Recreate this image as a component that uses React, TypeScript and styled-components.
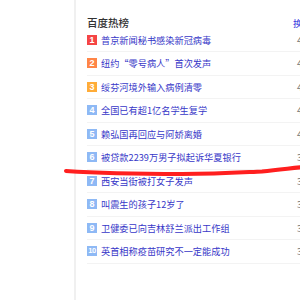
import React from 'react';
import styled, { createGlobalStyle } from 'styled-components';

const GlobalStyle = createGlobalStyle`
  html, body {
    margin: 0;
    padding: 0;
    background: #fff;
    overflow: hidden;
  }
  body {
    font-family: "Noto Sans CJK SC", "Noto Sans", Arial, sans-serif;
  }
`;

const hotList = [
  { title: '普京新闻秘书感染新冠病毒', index: '4985621' },
  { title: '纽约“零号病人”首次发声', index: '4872310' },
  { title: '绥芬河境外输入病例清零', index: '4710458' },
  { title: '全国已有超1亿名学生复学', index: '4528903' },
  { title: '赖弘国再回应与阿娇离婚', index: '4301276' },
  { title: '被贷款2239万男子拟起诉华夏银行', index: '3986514' },
  { title: '西安当街被打女子发声', index: '3752098' },
  { title: '叫震生的孩子12岁了', index: '3510387' },
  { title: '卫健委已向吉林舒兰派出工作组', index: '3298470' },
  { title: '英首相称疫苗研究不一定能成功', index: '3107652' },
];

const badgeColor = (rank: number) => {
  if (rank === 1) return '#f54545';
  if (rank === 2) return '#ff8547';
  if (rank === 3) return '#ffac38';
  return '#8eb9f5';
};

const Page = styled.div`
  position: relative;
  display: flex;
  width: 300px;
  height: 300px;
  overflow: hidden;
`;

const Gutter = styled.div`
  width: 74px;
  flex: none;
`;

const Panel = styled.section`
  flex: none;
  width: 280px;
  border-left: 2px solid #f0f0f0;
  padding: 16px 0 0 11px;
`;

const Header = styled.div`
  display: flex;
  align-items: center;
  height: 13px;
`;

const Heading = styled.h3`
  margin: 0;
  width: 206px;
  flex: none;
  font-size: 10.5px;
  font-weight: 500;
  color: #333;
  line-height: 13px;
`;

const Switch = styled.a`
  font-size: 9.5px;
  color: #3333dd;
  text-decoration: none;
  white-space: nowrap;
`;

const List = styled.ol`
  list-style: none;
  margin: 0;
  padding: 0;
  margin-top: -0.5px;
`;

const Row = styled.li`
  display: flex;
  align-items: center;
  height: 23.5px;
  border-bottom: 1px solid #f3f3f3;
  box-sizing: border-box;
`;

const Badge = styled.span<{ $bg: string; $wide?: boolean }>`
  flex: none;
  width: 10px;
  height: 10px;
  margin-right: 4px;
  background: ${(p) => p.$bg};
  color: #fff;
  font-family: "Liberation Sans", Arial, sans-serif;
  font-size: ${(p) => (p.$wide ? '7.5px' : '9px')};
  font-weight: bold;
  line-height: 10px;
  text-align: center;
  letter-spacing: ${(p) => (p.$wide ? '-0.5px' : '0')};
`;

const Title = styled.a`
  flex: none;
  width: 196px;
  font-size: 9.2px;
  color: #3737c8;
  text-decoration: none;
  white-space: nowrap;
  overflow: hidden;
`;

const Count = styled.span`
  font-size: 9.5px;
  color: #777;
  white-space: nowrap;
`;

const Scribble = styled.svg`
  position: absolute;
  left: 0;
  top: 0;
  pointer-events: none;
`;

const App = () => {
  return (
    <>
      <GlobalStyle />
      <Page>
        <Gutter />
        <Panel>
          <Header>
            <Heading>百度热榜</Heading>
            <Switch href="#">换一换</Switch>
          </Header>
          <List>
            {hotList.map((item, i) => (
              <Row key={item.title}>
                <Badge $bg={badgeColor(i + 1)} $wide={i + 1 >= 10}>
                  {i + 1}
                </Badge>
                <Title href="#">{item.title}</Title>
                <Count>{item.index}</Count>
              </Row>
            ))}
          </List>
        </Panel>
        <Scribble width="300" height="300" viewBox="0 0 300 300">
          <path
            d="M66 171 C 95 173, 150 174, 182 174 C 222 174, 248 172, 262 171.5 C 280 170, 292 168, 304 167"
            fill="none"
            stroke="#ff1f1f"
            strokeWidth="4"
            strokeLinecap="round"
          />
        </Scribble>
      </Page>
    </>
  );
};

export default App;
